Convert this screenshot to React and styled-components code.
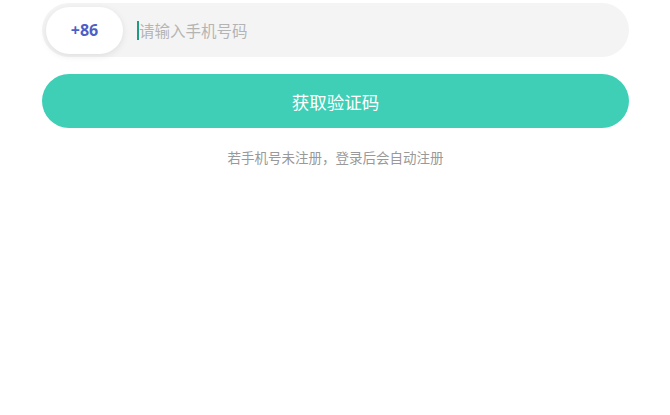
import React from 'react';
import styled, { createGlobalStyle } from 'styled-components';

const GlobalStyle = createGlobalStyle`
    html, body {
        margin: 0;
        padding: 0;
        background: #ffffff;
    }

    body {
        font-family: "Noto Sans", "Noto Sans CJK SC", sans-serif;
    }
`;

export default function App() {
    return (
        <>
            <GlobalStyle />
            <Page>
                <PhoneField>
                    <AreaCode>+86</AreaCode>
                    <Caret />
                    <Placeholder>请输入手机号码</Placeholder>
                </PhoneField>
                <SubmitButton type="button">获取验证码</SubmitButton>
                <Hint>若手机号未注册，登录后会自动注册</Hint>
            </Page>
        </>
    );
}

const Page = styled.div`
    width: 670px;
    height: 415px;
    box-sizing: border-box;
    padding: 3px 41px 0 42px;

    display: flex;
    flex-direction: column;
`;

const PhoneField = styled.div`
    height: 54px;
    box-sizing: border-box;
    padding: 0 4px;

    display: flex;
    align-items: center;

    background: #f4f4f4;
    border-radius: 27px;
`;

const AreaCode = styled.div`
    width: 77px;
    height: 47px;

    display: flex;
    align-items: center;
    justify-content: center;

    background: #ffffff;
    border-radius: 24px;
    box-shadow: 0 2px 7px rgba(0, 0, 0, 0.09);

    color: #4d5ec6;
    font-family: "Open Sans", "Noto Sans", sans-serif;
    font-size: 16px;
    font-weight: 700;
`;

const Caret = styled.span`
    width: 2px;
    height: 19px;
    margin-left: 14px;
    background: #1f9a83;
`;

const Placeholder = styled.span`
    padding-top: 2px;
    color: #b4b4b4;
    font-family: "Noto Sans CJK SC", sans-serif;
    font-size: 15.5px;
    line-height: 1;
`;

const SubmitButton = styled.button`
    height: 54px;
    margin-top: 17px;

    border: none;
    border-radius: 27px;
    background: #3ecfb6;

    color: #ffffff;
    font-family: "Noto Sans CJK SC", sans-serif;
    font-size: 17.5px;
    cursor: pointer;
`;

const Hint = styled.p`
    margin: 20px 0 0;
    text-align: center;

    color: #999999;
    font-family: "Noto Sans CJK SC", sans-serif;
    font-size: 13.5px;
    line-height: 18px;
`;
